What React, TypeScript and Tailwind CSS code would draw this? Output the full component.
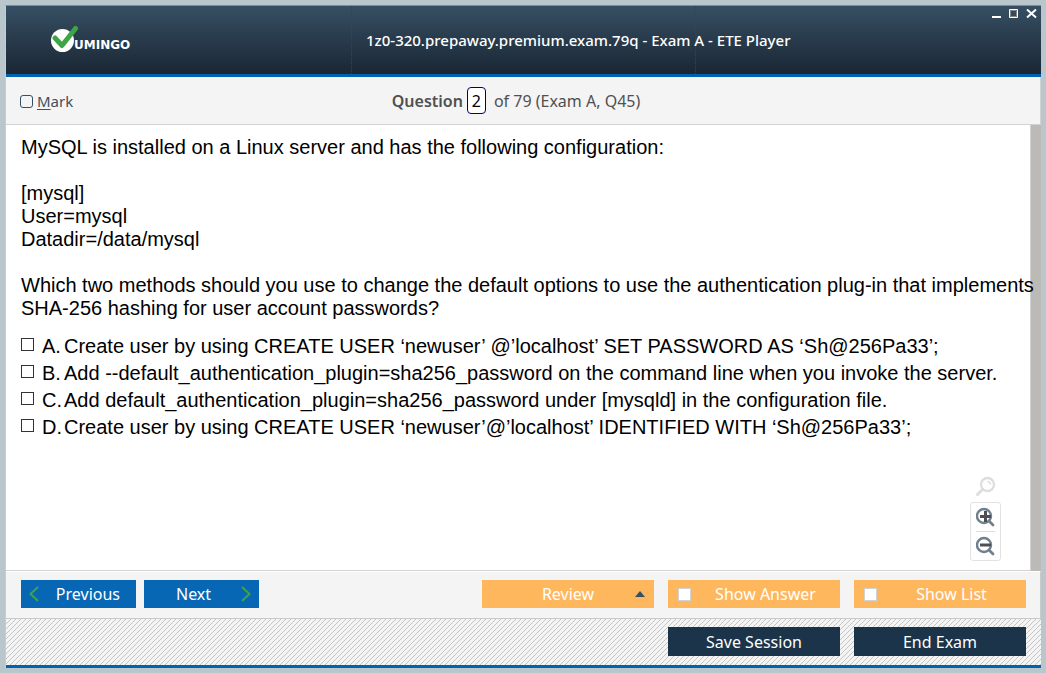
import { useState } from "react";

const options = [
  { key: "A", text: "Create user by using CREATE USER ‘newuser’ @’localhost’ SET PASSWORD AS ‘Sh@256Pa33’;" },
  { key: "B", text: "Add --default_authentication_plugin=sha256_password on the command line when you invoke the server." },
  { key: "C", text: "Add default_authentication_plugin=sha256_password under [mysqld] in the configuration file." },
  { key: "D", text: "Create user by using CREATE USER ‘newuser’@’localhost’ IDENTIFIED WITH ‘Sh@256Pa33’;" },
];

function Logo() {
  return (
    <svg width="80" height="28" viewBox="0 0 80 28" role="img" aria-label="Vumingo">
      <circle cx="11.500" cy="15.500" r="11.500" fill="#fff" />
      <path d="M4 13 11 20.500 24.500 3.500" fill="none" stroke="#3fa447" strokeWidth="5" strokeLinecap="round" strokeLinejoin="round" />
      <text x="23" y="24" fill="#fff" fontFamily="DejaVu Sans, sans-serif" fontWeight="700" fontSize="12">UMINGO</text>
    </svg>
  );
}

function Header() {
  return (
    <header className="grid h-[71px] shrink-0 grid-cols-3 border-b-3 border-[#0063b1] bg-linear-to-b from-[#374f64] to-[#1a2734]">
      <div className="flex items-start pt-[19px] pl-[45px]">
        <Logo />
      </div>
      <div className="flex items-center border-x border-dotted border-[#34416f] pl-[14px]">
        <h1 className="text-[15px] leading-5 font-medium whitespace-nowrap text-white">1z0-320.prepaway.premium.exam.79q - Exam A - ETE Player</h1>
      </div>
      <div className="flex items-start justify-end gap-2 pt-[3px] pr-1">
        <button type="button" aria-label="Minimize">
          <svg width="9" height="10" viewBox="0 0 9 10"><path d="M0 7h9v2H0z" fill="#fff" /></svg>
        </button>
        <button type="button" aria-label="Maximize">
          <svg width="9" height="10" viewBox="0 0 9 10"><path d="M.5.5h8v8h-8z" fill="none" stroke="#fff" /><path d="M1.500 1.500h6v6h-6z" fill="none" stroke="#8a8781" /></svg>
        </button>
        <button type="button" aria-label="Close">
          <svg width="11" height="10" viewBox="0 0 11 10"><path d="M1 .5 10 8.500M10 .5 1 8.500" stroke="#fff" strokeWidth="2" /></svg>
        </button>
      </div>
    </header>
  );
}

function ZoomTools() {
  return (
    <div className="absolute right-[29px] bottom-[9px] flex flex-col items-center gap-1">
      <button type="button" aria-label="Reset zoom">
        <svg width="22" height="22" viewBox="0 0 22 22" fill="none" stroke="#dedede">
          <circle cx="12.500" cy="8.500" r="6.500" strokeWidth="2.400" />
          <path d="M7.500 13.500 2.500 18.500" strokeWidth="3" strokeLinecap="round" />
          <path d="M12.500 5.500a3 3 0 0 1 3 3" strokeWidth="1.500" />
        </svg>
      </button>
      <div className="flex w-[31px] flex-col items-center rounded-[3px] border border-[#e2e2e2] bg-white">
        <button type="button" aria-label="Zoom in" className="flex h-[29px] items-center border-b border-[#dddddd]">
          <svg width="19" height="20" viewBox="0 0 19 20" fill="none" stroke="#71808d">
            <circle cx="8" cy="9" r="7" strokeWidth="2.400" />
            <path d="M13 14 17 18" strokeWidth="2.800" strokeLinecap="round" />
            <path d="M4 9.500h11M9.500 4v11" stroke="#4c5055" strokeWidth="3" />
          </svg>
        </button>
        <button type="button" aria-label="Zoom out" className="flex h-7 items-center">
          <svg width="19" height="20" viewBox="0 0 19 20" fill="none" stroke="#71808d">
            <circle cx="8" cy="9" r="7" strokeWidth="2.400" />
            <path d="M13 14 17 18" strokeWidth="2.800" strokeLinecap="round" />
            <path d="M4 9h11" stroke="#4c5055" strokeWidth="3" />
          </svg>
        </button>
      </div>
    </div>
  );
}

function ToggleButton({ label }: { label: string }) {
  return (
    <label className="flex h-7 w-[172px] items-center bg-[#ffb75e] pl-[10px] text-white">
      <input type="checkbox" className="size-[13px] shrink-0 appearance-none border border-[#d2d2d2] bg-white checked:bg-[#374f64]" />
      <span className="flex-1 text-center">{label}</span>
    </label>
  );
}

export default function App() {
  const [question, setQuestion] = useState("2");
  return (
    <div className="flex min-h-screen flex-col bg-[#b9c6cc] p-[5px] font-['Noto_Sans',sans-serif]">
      <div className="flex flex-1 flex-col border-t border-l border-t-[#7d8b93] border-l-[#c9cccd] bg-white">
        <Header />
        <div className="grid h-12 shrink-0 grid-cols-[1fr_auto_1fr] items-center border-r border-b border-[#d2d2d2] bg-[#f4f4f4] pr-7 pl-[14px] text-base text-[#505050]">
          <label className="flex items-center gap-1 pt-px text-[15px] text-[#3f5060]">
            <input type="checkbox" className="size-[13px] appearance-none rounded-[3px] border border-[#374f64] checked:bg-[#374f64]" />
            <span><u className="underline-offset-2">M</u>ark</span>
          </label>
          <div className="flex items-center">
            <label htmlFor="question" className="font-semibold">Question</label>
            <input id="question" value={question} onChange={(e) => setQuestion(e.target.value)} className="mr-2 ml-1 h-[27px] w-[19px] rounded-sm border border-[#00007d] bg-white text-center text-black" />
            <span>of 79 (Exam A, Q45)</span>
          </div>
        </div>
        <div className="flex flex-1">
          <main className="relative min-w-0 flex-1 border-r border-b border-[#d2d2d2] pt-[11px] pl-[15px] font-['Liberation_Sans',sans-serif] text-[20px] leading-[23px] text-black">
            <p>MySQL is installed on a Linux server and has the following configuration:</p>
            <p className="mt-[23px]">[mysql]<br />User=mysql<br />Datadir=/data/mysql</p>
            <p className="mt-[23px] lg:whitespace-nowrap">Which two methods should you use to change the default options to use the authentication plug-in that implements<br className="hidden lg:inline" /> SHA-256 hashing for user account passwords?</p>
            <ul className="mt-[13px]">
              {options.map((o) => (
                <li key={o.key}>
                  <label className="flex h-[27px] items-center">
                    <input type="checkbox" className="mr-2 mb-1 size-[13px] appearance-none border border-[#333333] bg-white checked:bg-[#333333]" />
                    <span className="w-[22px]">{o.key}.</span>
                    <span>{o.text}</span>
                  </label>
                </li>
              ))}
            </ul>
            <ZoomTools />
          </main>
          <div className="w-[10px] shrink-0 bg-[#bbbab6]" />
        </div>
        <nav className="flex h-12 shrink-0 items-center border-t border-r border-b border-[#c9c9c9] border-t-white bg-[#f4f4f4] pr-[14px] pb-[2px] pl-[15px] text-base text-white">
          <button type="button" className="flex h-7 w-[115px] items-center justify-between bg-[#0867b5] pr-4 pl-2">
            <svg width="10" height="16" viewBox="0 0 10 16"><path d="M9 1 1.500 8 9 15" fill="none" stroke="#3fa447" strokeWidth="2" /></svg>
            Previous
          </button>
          <button type="button" className="ml-2 flex h-7 w-[115px] items-center justify-between bg-[#0867b5] pr-2 pl-8">
            Next
            <svg width="10" height="16" viewBox="0 0 10 16"><path d="M1 1 8.500 8 1 15" fill="none" stroke="#3fa447" strokeWidth="2" /></svg>
          </button>
          <div className="ml-auto flex gap-[14px]">
            <button type="button" className="flex h-7 w-[172px] items-center bg-[#ffb75e] pr-[9px] pl-[19px]">
              <span className="flex-1 text-center">Review</span>
              <svg width="10" height="6" viewBox="0 0 10 6"><path d="M0 6 5 0 10 6z" fill="#374f64" /></svg>
            </button>
            <ToggleButton label="Show Answer" />
            <ToggleButton label="Show List" />
          </div>
        </nav>
        <footer className="flex h-[49px] shrink-0 items-center justify-end gap-[14px] border-b-3 border-[#0063b1] bg-[#f4f4f4] bg-[linear-gradient(135deg,transparent_44%,#c4c4c4_44%_56%,transparent_56%)] bg-[length:5px_5px] pr-[15px] pb-px text-base text-white">
          <button type="button" className="h-[29px] w-[172px] bg-[#1b344a]">Save Session</button>
          <button type="button" className="h-[29px] w-[172px] bg-[#1b344a]">End Exam</button>
        </footer>
      </div>
    </div>
  );
}
